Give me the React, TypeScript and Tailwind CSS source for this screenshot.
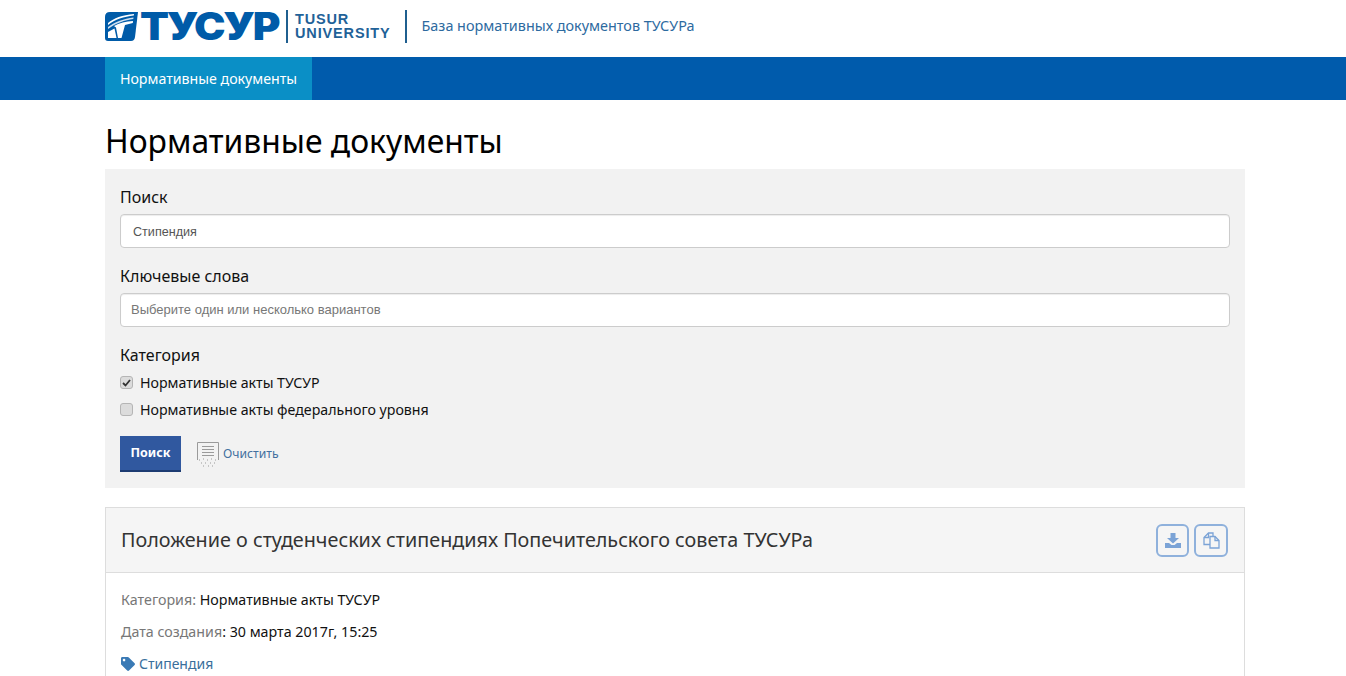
import React from 'react';
import { FaTag } from 'react-icons/fa';

const font = { fontFamily: '"Noto Sans", "Open Sans", sans-serif' };

const LogoMark = () => (
    <svg width="33" height="29" viewBox="0 0 33 29" className="shrink-0">
        <path d="M5 0 H33 L30 25 Q29.500 29 26 29 H3 Q0 29 0 26 V5 Q0 0 5 0 Z" fill="#005ba8" />
        <path d="M3 11 C9 6 17 3 29 2 L28.800 3.500 C19 4.500 10 7.500 3 13 Z" fill="#fff" />
        <path d="M3 15 C10 10 19 6.500 28.500 5.500 L28.300 7 C20 8 11 11 3 17 Z" fill="#cfe0f0" />
        <path d="M9 14 C14 11 21 9.500 28 9 L27.800 11 L20 13 L16.500 26 L13 26 L11 15.500 Z" fill="#fff" />
        <path d="M3 20 L9.500 16.500 L11.500 26 L3 26 Z" fill="#fff" />
    </svg>
);

const ClearIcon = () => (
    <svg width="24" height="28" viewBox="0 0 24 28" fill="none" stroke="#9a9a9a">
        <path d="M1.500 19 V1.500 H22.500 V19" />
        <path d="M6 5.500 H18 M6 8.500 H18 M6 11.500 H18 M6 14.500 H18" />
        <path d="M3 19 h1 M7 18 h1 M11 19 h1 M15 18 h1 M19 19 h1 M5 22 h1 M9 22 h1 M14 22 h1 M18 22 h1 M7 25 h1 M12 25 h1 M16 25 h1" strokeDasharray="1 1" />
    </svg>
);

const DownloadIcon = () => (
    <svg width="16" height="15" viewBox="0 0 16 15" fill="#7ba3d6">
        <path d="M5.500 0 H10.500 V5 H14 L8 10.500 L2 5 H5.500 Z" />
        <path d="M0 10 H4 L6.500 12 H9.500 L12 10 H16 V15 H0 Z" />
    </svg>
);

const CopyIcon = () => (
    <svg width="17" height="17" viewBox="0 0 17 17" fill="none" stroke="#7ba3d6" strokeWidth="1.300">
        <path d="M7 12.500 H1 V5.500 L5.500 1 H10 V4.500" />
        <path d="M5.500 1 V5.500 H1" />
        <path d="M7 4.500 H12 L16 8.500 V16 H7 Z" />
        <path d="M12 4.500 V8.500 H16" />
    </svg>
);

const CheckBox = ({ checked }: { checked?: boolean }) => (
    <span className="w-[13px] h-[13px] mr-[7px] shrink-0 rounded-[3px] bg-[#dcdcdc] border border-[#b5b5b5] flex items-center justify-center">
        {checked && (
            <svg width="9" height="8" viewBox="0 0 9 8" fill="none" stroke="#333" strokeWidth="1.800">
                <path d="M1 4 L3.500 6.500 L8 1" />
            </svg>
        )}
    </span>
);

const App: React.FC = () => {
    return (
        <div className="h-[676px] overflow-hidden bg-white text-[#111]" style={font}>
            {/* Header */}
            <div className="h-[57px] px-[105px] flex items-start">
                <div className="flex items-center mt-[9px] h-[34px]">
                    <LogoMark />
                    <span
                        className="ml-[2px] w-[141px] text-[38px] leading-[34px] font-black text-[#005ba8] tracking-[-2px] whitespace-nowrap origin-left scale-x-[1.11]"
                        style={{ fontFamily: 'Inter, sans-serif' }}
                    >
                        ТУСУР
                    </span>
                    <div className="ml-[5px] w-[2px] h-[33px] bg-[#1f5f8f]" />
                    <div
                        className="ml-[7px] text-[14.500px] leading-[14px] font-bold text-[#1f6298] tracking-[0.85px]"
                        style={{ fontFamily: '"Liberation Sans", sans-serif' }}
                    >
                        <div>TUSUR</div>
                        <div>UNIVERSITY</div>
                    </div>
                    <div className="ml-[14px] w-[2px] h-[33px] bg-[#1f5f8f]" />
                    <span className="ml-[15px] text-[14.400px] text-[#2d6a9f] whitespace-nowrap">База нормативных документов ТУСУРа</span>
                </div>
            </div>

            {/* Nav */}
            <div className="h-[43px] bg-[#005bac] px-[105px] flex">
                <a className="w-[207px] bg-[#0a8fc6] text-white text-[14.200px] flex items-center justify-center whitespace-nowrap">
                    Нормативные документы
                </a>
            </div>

            <div className="pl-[105px] pr-[101px]">
                <h1 className="mt-[20px] h-[49px] text-[31.850px] leading-[42px] font-normal text-black">Нормативные документы</h1>

                {/* Search form */}
                <div className="h-[319px] bg-[#f2f2f2] pt-[16px] px-[15px]">
                    <label className="block text-[16px] leading-[24px]">Поиск</label>
                    <input
                        readOnly
                        value="Стипендия"
                        className="mt-[5px] block w-full h-[34px] bg-white border border-[#ccc] rounded-[4px] px-3 pt-[1px] text-[12.600px] text-[#555] shadow-[inset_0_1px_1px_rgba(0,0,0,0.075)] outline-none"
                        style={{ fontFamily: '"Liberation Sans", sans-serif' }}
                    />
                    <label className="block mt-[16px] text-[16px] leading-[24px]">Ключевые слова</label>
                    <input
                        readOnly
                        placeholder="Выберите один или несколько вариантов"
                        className="mt-[5px] block w-full h-[34px] bg-white border border-[#ccc] rounded-[4px] px-[10px] pb-[1px] text-[13px] placeholder:text-[#777] shadow-[inset_0_1px_1px_rgba(0,0,0,0.075)] outline-none"
                        style={{ fontFamily: '"Liberation Sans", sans-serif' }}
                    />
                    <label className="block mt-[16px] text-[16px] leading-[24px]">Категория</label>
                    <div className="mt-[2px] flex items-center h-[27px] text-[14.200px]">
                        <CheckBox checked />
                        Нормативные акты ТУСУР
                    </div>
                    <div className="flex items-center h-[27px] text-[14.200px]">
                        <CheckBox />
                        Нормативные акты федерального уровня
                    </div>
                    <div className="mt-[13px] flex items-center">
                        <button className="w-[61px] h-[36px] bg-[#30589f] border-b-2 border-[#1d3c72] text-white text-[12.500px] font-bold">
                            Поиск
                        </button>
                        <div className="ml-[15px] mt-[2px]">
                            <ClearIcon />
                        </div>
                        <a className="ml-[3px] mt-[1px] text-[12.200px] text-[#43709f]">Очистить</a>
                    </div>
                </div>

                {/* Document card */}
                <div className="mt-[19px] h-[300px] border border-[#ddd]">
                    <div className="h-[65px] bg-[#f5f5f5] border-b border-[#ddd] pl-[15px] pr-[16px] flex items-center justify-between">
                        <span className="text-[19.750px] text-[#333]">Положение о студенческих стипендиях Попечительского совета ТУСУРа</span>
                        <div className="flex gap-[5px]">
                            <button className="w-[33px] h-[33px] border-2 border-[#8fb1dc] rounded-[6px] flex items-center justify-center">
                                <DownloadIcon />
                            </button>
                            <button className="w-[34px] h-[33px] border-2 border-[#8fb1dc] rounded-[6px] flex items-center justify-center">
                                <CopyIcon />
                            </button>
                        </div>
                    </div>
                    <div className="px-[15px] pt-[15px] text-[14.250px] leading-[24px]">
                        <p>
                            <span className="text-[#777]">Категория:</span> Нормативные акты ТУСУР
                        </p>
                        <p className="mt-[8px]">
                            <span className="text-[#777]">Дата создания</span>: 30 марта 2017г, 15:25
                        </p>
                        <p className="mt-[8px] flex items-center text-[14px] text-[#3a6f9c]">
                            <FaTag size={14} color="#3a7ab5" className="mr-[4px]" />
                            Стипендия
                        </p>
                    </div>
                </div>
            </div>
        </div>
    );
};

export default App;
